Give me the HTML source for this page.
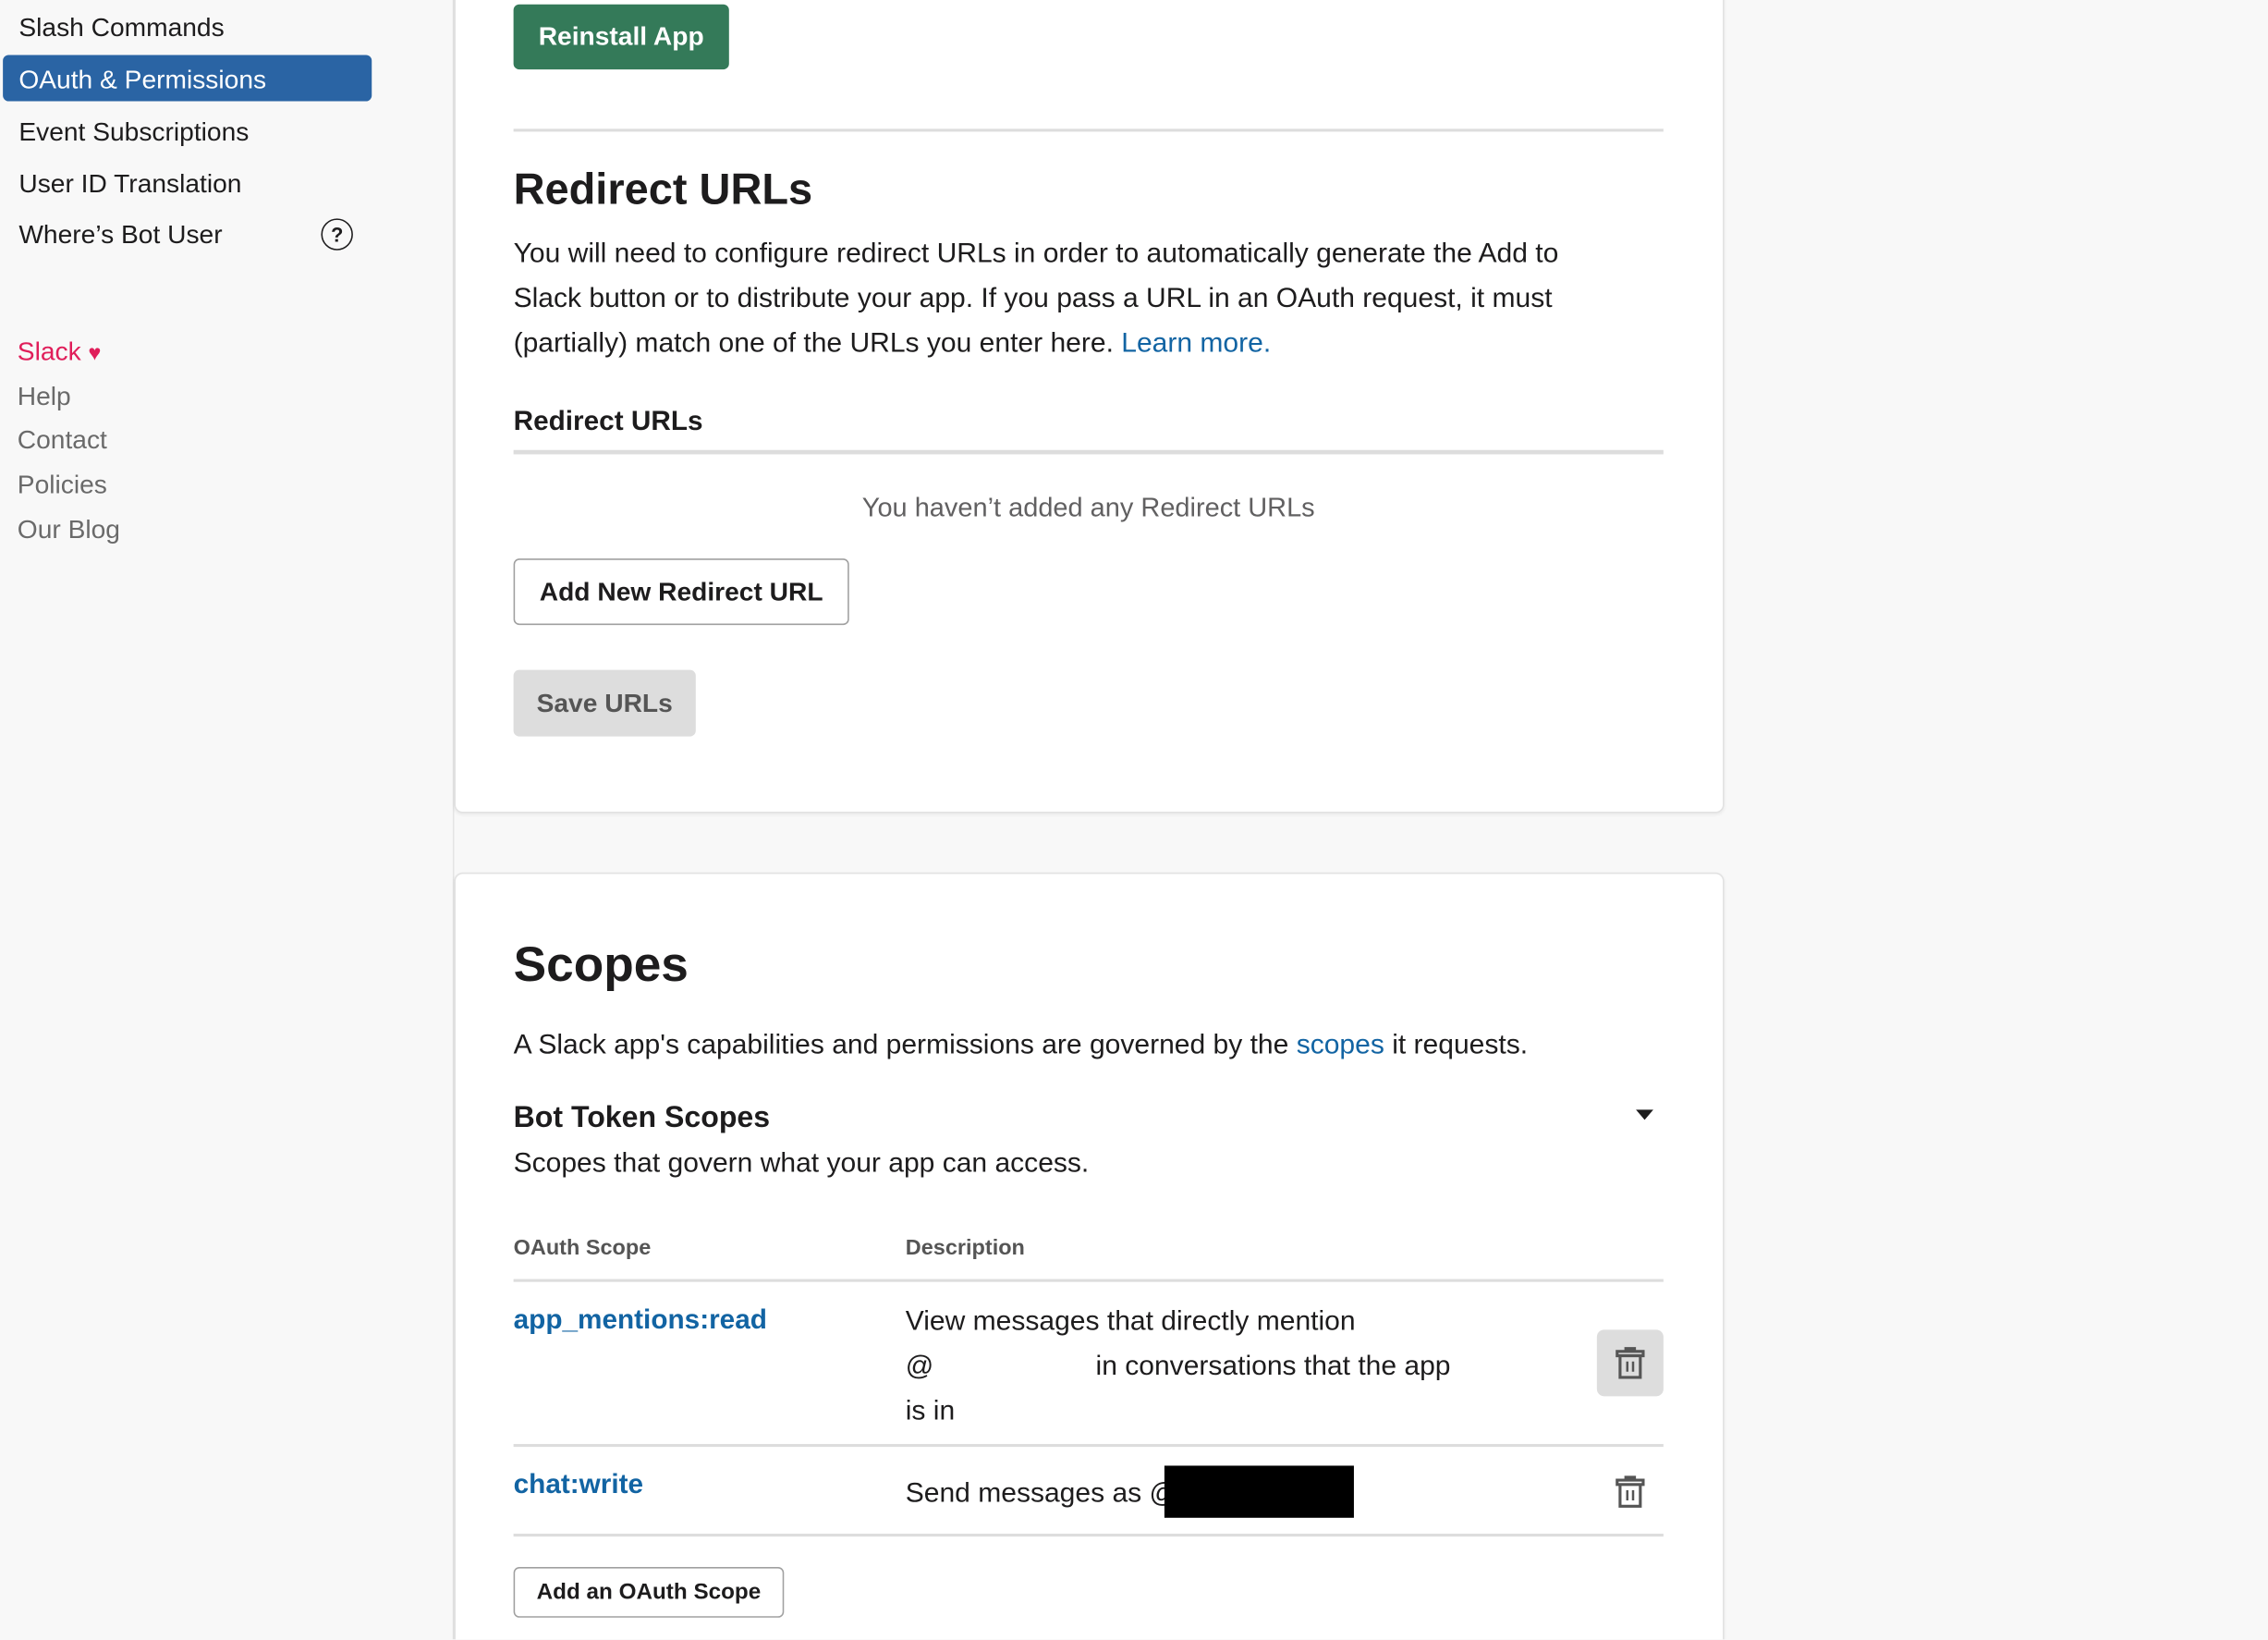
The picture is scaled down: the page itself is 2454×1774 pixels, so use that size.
<!DOCTYPE html>
<html><head><meta charset="utf-8"><style>
html,body{margin:0;padding:0;width:2454px;height:1774px;overflow:hidden;background:#f8f8f8;}
#w{position:absolute;left:0;top:0;width:1568px;height:1133px;overflow:hidden;transform:scale(1.5651);transform-origin:0 0;font-family:"Liberation Sans",sans-serif;color:#1d1c1d;}
.a{position:absolute;white-space:nowrap;}
.side{position:absolute;left:0;top:0;width:313px;height:1134px;background:#f8f8f8;border-right:1px solid #e4e4e4;}
.card{position:absolute;left:314px;width:876px;background:#fff;border:1px solid #e2e2e2;border-radius:6px;box-shadow:0 1px 2px rgba(0,0,0,.06);}
.n{font-size:18px;left:13px;color:#1d1c1d;}
.f{font-size:18px;left:12px;color:#6a6a6a;}
.p{font-size:19.2px;line-height:31px;}
.hr{position:absolute;left:355px;width:795px;background:#ddd;}
.btn{position:absolute;box-sizing:border-box;border-radius:4px;font-weight:bold;display:flex;align-items:center;justify-content:center;font-size:18px;}
a{color:#1264a3;text-decoration:none;}
</style></head><body><div id="w">
<div class="side"></div>
<div class="card" style="top:-10px;height:570px"></div>
<div class="card" style="top:603px;height:560px"></div>

<div class="a n" style="top:9px">Slash Commands</div>
<div class="a" style="left:2px;top:38px;width:255px;height:32px;background:#2a64a4;border-radius:4px"></div>
<div class="a n" style="top:45px;color:#fff">OAuth &amp; Permissions</div>
<div class="a n" style="top:81px">Event Subscriptions</div>
<div class="a n" style="top:117px">User ID Translation</div>
<div class="a n" style="top:152px">Where’s Bot User</div>
<div class="a" style="left:222px;top:151px;width:20px;height:20px;border:1.6px solid #1d1c1d;border-radius:50%;font-size:14px;font-weight:bold;text-align:center;line-height:20px">?</div>
<div class="a f" style="top:233px;color:#e01e5a">Slack <span style="font-size:15px">♥</span></div>
<div class="a f" style="top:264px">Help</div>
<div class="a f" style="top:294px">Contact</div>
<div class="a f" style="top:325px">Policies</div>
<div class="a f" style="top:356px">Our Blog</div>

<div class="btn" style="left:355px;top:3px;width:149px;height:45px;background:#347a59;color:#fff">Reinstall App</div>
<div class="hr" style="top:89px;height:2px"></div>
<div class="a" style="left:355px;top:115px;font-size:30px;font-weight:bold">Redirect URLs</div>
<div class="a p" style="left:355px;top:160px">You will need to configure redirect URLs in order to automatically generate the Add to<br>Slack button or to distribute your app. If you pass a URL in an OAuth request, it must<br>(partially) match one of the URLs you enter here. <a>Learn more.</a></div>
<div class="a" style="left:355px;top:281px;font-size:19px;font-weight:bold">Redirect URLs</div>
<div class="hr" style="top:311px;height:3px"></div>
<div class="a" style="left:355px;width:795px;text-align:center;top:340px;font-size:18.5px;color:#616061">You haven’t added any Redirect URLs</div>
<div class="btn" style="left:355px;top:386px;width:232px;height:46px;border:1px solid #a0a0a0;background:#fff">Add New Redirect URL</div>
<div class="btn" style="left:355px;top:463px;width:126px;height:46px;background:#ddd;color:#555">Save URLs</div>

<div class="a" style="left:355px;top:648px;font-size:34px;font-weight:bold">Scopes</div>
<div class="a p" style="left:355px;top:707px">A Slack app's capabilities and permissions are governed by the <a>scopes</a> it requests.</div>
<div class="a" style="left:355px;top:761px;font-size:20.5px;font-weight:bold">Bot Token Scopes</div>
<svg class="a" style="left:1130px;top:766px" width="14" height="10"><path d="M1 1h12L7 8z" fill="#1d1c1d"/></svg>
<div class="a p" style="left:355px;top:789px">Scopes that govern what your app can access.</div>
<div class="a" style="left:355px;top:854px;font-size:15px;font-weight:bold;color:#555">OAuth Scope</div>
<div class="a" style="left:626px;top:854px;font-size:15px;font-weight:bold;color:#555">Description</div>
<div class="hr" style="top:884px;height:2px"></div>
<div class="a" style="left:355px;top:902px;font-size:19px;font-weight:bold;color:#1264a3">app_mentions:read</div>
<div class="a p" style="left:626px;top:898px">View messages that directly mention<br>@<span style="display:inline-block;width:112px"></span>in conversations that the app<br>is in</div>
<div class="a" style="left:1104px;top:919px;width:46px;height:46px;background:#ddd;border-radius:5px"></div>
<svg class="a" style="left:1116px;top:930px" width="22" height="24" viewBox="0 0 22 24"><g fill="none" stroke="#555" stroke-width="2"><path d="M8 4V2h6v2M2 4h18v3H2zM4 7v15h14V7"/><path d="M9 11v7M13 11v7" stroke-width="1.6"/></g></svg>
<div class="hr" style="top:998px;height:2px"></div>
<div class="a" style="left:355px;top:1016px;font-size:19px;font-weight:bold;color:#1264a3">chat:write</div>
<div class="a p" style="left:626px;top:1017px">Send messages as @</div>
<div class="a" style="left:805px;top:1013px;width:131px;height:36px;background:#000"></div>
<svg class="a" style="left:1116px;top:1019px" width="22" height="24" viewBox="0 0 22 24"><g fill="none" stroke="#555" stroke-width="2"><path d="M8 4V2h6v2M2 4h18v3H2zM4 7v15h14V7"/><path d="M9 11v7M13 11v7" stroke-width="1.6"/></g></svg>
<div class="hr" style="top:1060px;height:2px"></div>
<div class="btn" style="left:355px;top:1083px;width:187px;height:35px;border:1px solid #a0a0a0;background:#fff;font-size:15.5px">Add an OAuth Scope</div>
</div></body></html>
